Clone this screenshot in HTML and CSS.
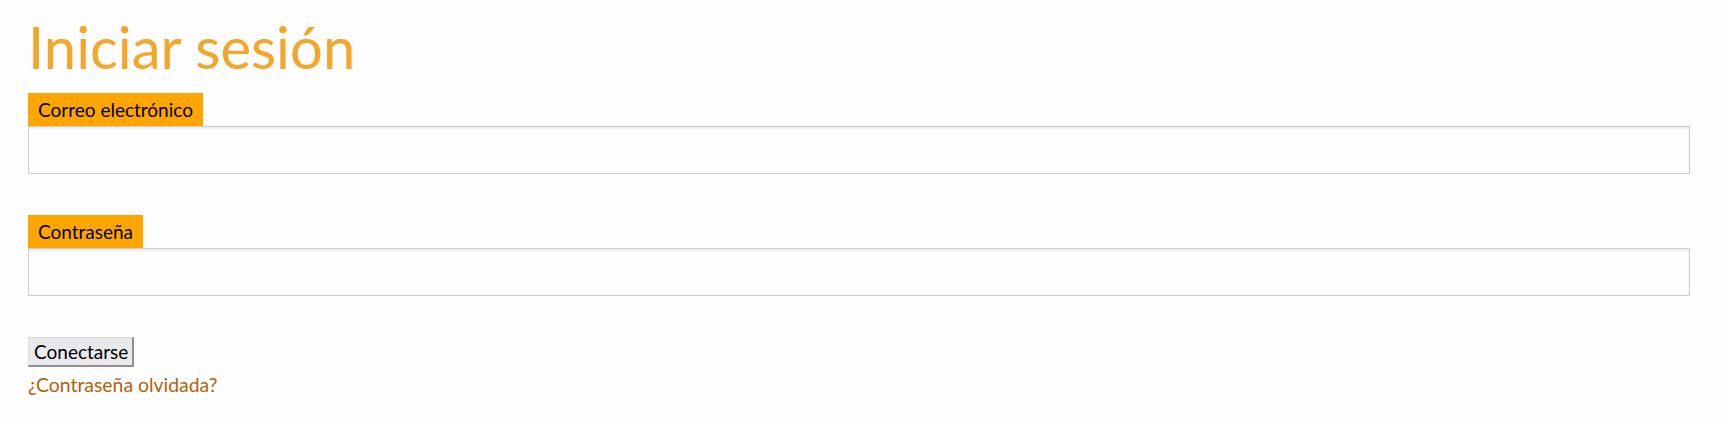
FILE: index.html
```html
<!DOCTYPE html>
<html lang="es">
<head>
<meta charset="UTF-8">
<meta name="viewport" content="width=device-width, initial-scale=1.0">
<title>Iniciar sesión</title>
<link rel="stylesheet" href="styles.css">
</head>
<body>
<div class="login-container">
    <h1 class="login-title">Iniciar sesión</h1>
    <form class="login-form" onsubmit="return false;">
        <div class="field">
            <label class="field-label" for="email">Correo electrónico</label>
            <input class="field-input" type="email" id="email" />
        </div>
        <div class="field">
            <label class="field-label" for="password">Contraseña</label>
            <input class="field-input" type="password" id="password" />
        </div>
        <button type="submit" class="login-button">Conectarse</button>
        <a href="#" class="forgot-link">¿Contraseña olvidada?</a>
    </form>
</div>
</body>
</html>
```

FILE: styles.css
```css
body {
    font-family: Lato, "Liberation Sans", sans-serif;
    background-color: #fdfdfd;
    margin: 0;
    color: #000000;
}
.login-container {
    padding: 12px 37px 20px 28px;
}
.login-title {
    color: #f4a62a;
    font-weight: normal;
    font-size: 58px;
    line-height: 70px;
    margin: 0 0 11px 0;
}
.login-form {
    display: flex;
    flex-direction: column;
    align-items: flex-start;
}
.field {
    display: flex;
    flex-direction: column;
    align-items: flex-start;
    width: 100%;
    margin-bottom: 41px;
}
.field-label {
    background-color: #ffa500;
    padding: 0 10px;
    font-size: 19px;
    line-height: 33px;
}
.field-input {
    box-sizing: border-box;
    width: 100%;
    height: 48px;
    border: 1px solid #cccccc;
    box-shadow: inset 0 2px 2px rgba(0, 0, 0, 0.06);
    background-color: #fdfdfd;
    margin: 0;
}
.login-button {
    font-family: Lato, "Liberation Sans", sans-serif;
    font-size: 19px;
    height: 30px;
    padding: 0 4px 0 5px;
    background-color: #e9e9ed;
    border-style: solid;
    border-width: 1px 2px 2px 1px;
    border-color: #d8d8dc #8f8f93 #8f8f93 #d8d8dc;
    color: #000000;
}
.forgot-link {
    color: #b0620c;
    text-decoration: none;
    font-size: 19.4px;
    line-height: 30px;
    margin-top: 3px;
}
```
